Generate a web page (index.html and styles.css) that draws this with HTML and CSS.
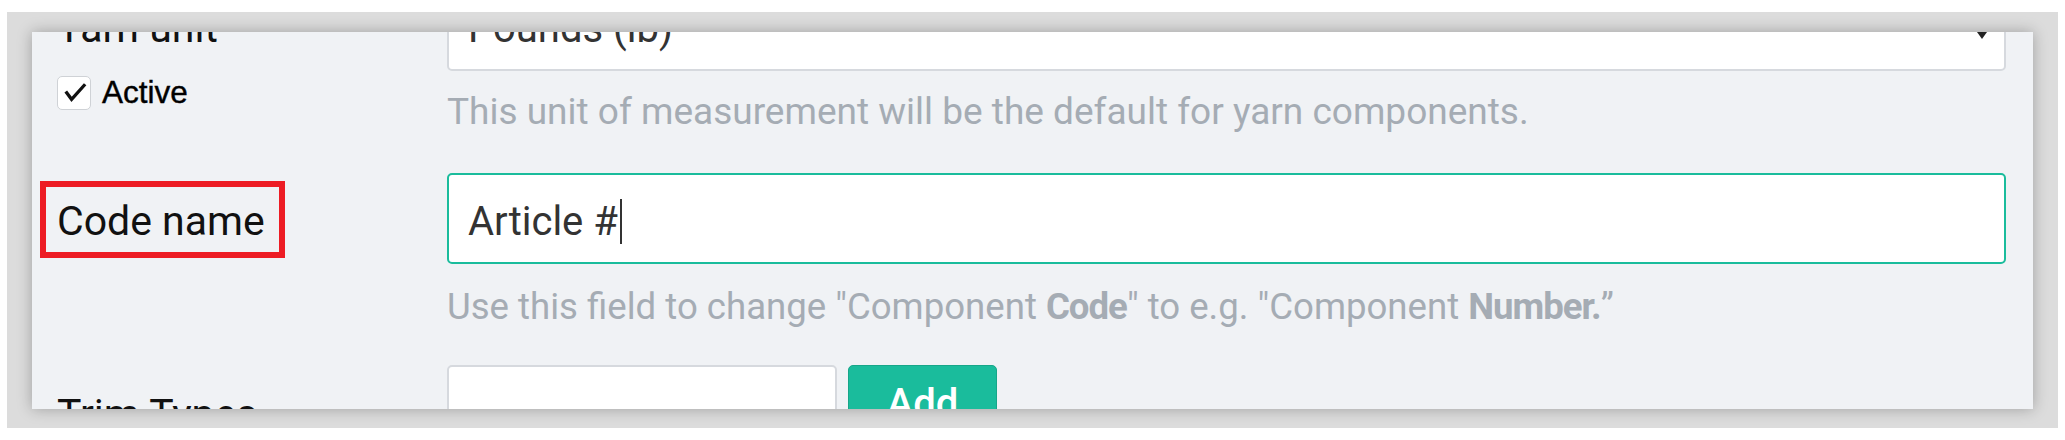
FILE: index.html
```html
<!DOCTYPE html>
<html lang="en">
<head>
<meta charset="utf-8">
<title>Settings</title>
<link rel="stylesheet" href="styles.css">
</head>
<body>
<div class="frame">
  <div class="panel">
    <div class="form">
      <div class="row">
        <div class="label-col">
          <div class="lbl">Yarn unit</div>
          <label class="check">
            <span class="box"><svg width="33" height="33" viewBox="0 0 33 33"><path d="M8 15.5 L14 23.5 L28 8" fill="none" stroke="#111" stroke-width="3.4" stroke-linejoin="miter"/></svg></span>
            <span class="check-text">Active</span>
          </label>
        </div>
        <div class="field-col">
          <div class="control select">Pounds (lb)<span class="arrow"></span></div>
          <p class="help help-1">This unit of measurement will be the default for yarn components.</p>
        </div>
      </div>
      <div class="row row-code">
        <div class="label-col">
          <span class="lbl boxed">Code name</span>
        </div>
        <div class="field-col">
          <div class="control focus">Article #<span class="caret"></span></div>
          <p class="help help-2">Use this field to change "Component <b>Code</b>" to e.g. "Component <b>Number.</b>”</p>
        </div>
      </div>
      <div class="row row-trim">
        <div class="label-col">
          <div class="lbl lbl-trim">Trim Types</div>
        </div>
        <div class="field-col add-row">
          <div class="control small"></div>
          <button class="btn-add" type="button">Add</button>
        </div>
      </div>
    </div>
  </div>
</div>
</body>
</html>
```

FILE: styles.css
```css
* { box-sizing: border-box; }

html, body {
  margin: 0;
  padding: 0;
  background: #ffffff;
  font-family: Roboto, "Liberation Sans", sans-serif;
}

.frame {
  margin: 12px 7px 0 7px;
  height: 416px;
  background: #dcdcdc;
  padding: 20px 25px 19px 25px;
}

.panel {
  height: 377px;
  background: #f0f2f5;
  overflow: hidden;
  box-shadow: 0 0 14px rgba(0, 0, 0, 0.28);
}

.form {
  margin-top: -52px;
}

.row {
  display: flex;
  align-items: baseline;
}

.label-col {
  flex: none;
  width: 415px;
  padding-left: 25px;
}

.field-col {
  flex: 1;
  padding-right: 27px;
}

.lbl {
  font-size: 41px;
  line-height: 48px;
  color: #111;
}

.check {
  display: flex;
  align-items: center;
  margin-top: 22px;
}

.box {
  width: 34px;
  height: 34px;
  background: #fff;
  border: 1px solid #cfd2d6;
  border-radius: 5px;
  display: flex;
  align-items: center;
  justify-content: center;
}

.box svg { display: block; }

.check-text {
  margin-left: 11px;
  font-family: "Liberation Sans", Arial, sans-serif;
  font-size: 31.5px;
  color: #000;
  -webkit-text-stroke: 0.4px #000;
}

.control {
  position: relative;
  height: 91px;
  background: #fff;
  border: 2px solid #d6d9de;
  border-radius: 5px;
  padding: 6px 20px 0 19px;
  display: flex;
  align-items: center;
  font-size: 40px;
  color: #333;
}

.focus {
  border-color: #1abc9c;
}

.arrow {
  position: absolute;
  right: 17px;
  top: 50px;
  width: 0;
  height: 0;
  border-left: 5px solid transparent;
  border-right: 5px solid transparent;
  border-top: 7px solid #222;
}

.caret {
  display: inline-block;
  width: 2px;
  height: 45px;
  background: #333;
  margin-left: 2px;
}

.help {
  margin: 20px 0 0 0;
  font-size: 37px;
  line-height: 42px;
  color: #a5acb4;
}

.help b {
  font-weight: 700;
  letter-spacing: -1px;
}

.help-2 {
  margin-top: 22px;
  font-size: 36.6px;
}

.row-code {
  margin-top: 40px;
}

.boxed {
  display: inline-block;
  border: 6px solid #ed1c24;
  padding: 10px 14px 7px 11px;
  margin-left: -17px;
}

.row-trim {
  margin-top: 37px;
  align-items: flex-start;
}

.lbl-trim {
  padding-top: 25px;
}

.add-row {
  display: flex;
  align-items: flex-start;
  gap: 11px;
}

.small {
  width: 390px;
  flex: none;
  height: 91px;
}

.btn-add {
  flex: none;
  width: 149px;
  height: 76px;
  background: #1abc9c;
  border: 1px solid #17a689;
  border-radius: 5px;
  color: #fff;
  font-family: Roboto, "Liberation Sans", sans-serif;
  font-size: 40px;
  font-weight: 500;
  padding: 0;
}
```
